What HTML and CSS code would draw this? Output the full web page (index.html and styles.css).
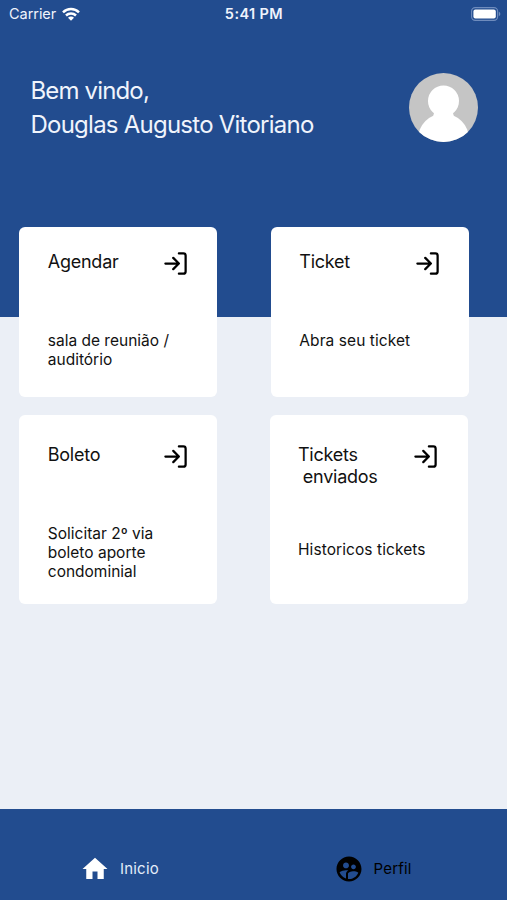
FILE: index.html
```html
<!DOCTYPE html>
<html lang="pt-BR">
<head>
<meta charset="utf-8">
<title>Inicio</title>
<link rel="stylesheet" href="styles.css">
</head>
<body>
<svg width="0" height="0" class="defs" aria-hidden="true">
  <symbol id="enter" viewBox="0 0 24 24">
    <path d="M15 3h4a2 2 0 0 1 2 2v14a2 2 0 0 1-2 2h-4M10 17l5-5-5-5M15 12H3" fill="none" stroke="#000" stroke-width="2" stroke-linecap="round" stroke-linejoin="round"/>
  </symbol>
</svg>
<div class="screen">
  <header class="hero">
    <div class="status">
      <div class="status-left"><span class="carrier">Carrier</span>
        <svg class="wifi" viewBox="0 0 18 14" fill="none" stroke="#fff" stroke-width="2.5">
          <path d="M1 5.3a11.5 11.5 0 0 1 16 0M4 8.5a7.2 7.2 0 0 1 10 0"/>
          <path d="M9 13.8L6 10.8a4.2 4.2 0 0 1 6 0z" fill="#fff" stroke="none"/>
        </svg>
      </div>
      <span class="clock">5:41 PM</span>
      <svg class="battery" viewBox="0 0 30 14">
        <rect x="0.6" y="0.6" width="26" height="12.8" rx="3.6" fill="none" stroke="#6f8cbd" stroke-width="1.1"/>
        <rect x="2.4" y="2.4" width="22.4" height="9.2" rx="2" fill="#fff"/>
        <path d="M27.8 4.8c2 .7 2 3.7 0 4.4z" fill="#6f8cbd"/>
      </svg>
    </div>
    <div class="welcome">
      <p class="greeting"><span class="hello">Bem vindo,</span><br><span class="name">Douglas Augusto Vitoriano</span></p>
      <svg class="avatar" viewBox="0 0 69 69">
        <clipPath id="round"><circle cx="34.5" cy="34.5" r="34.5"/></clipPath>
        <g clip-path="url(#round)">
          <rect width="69" height="69" fill="#c5c5c5"/>
          <circle cx="34.5" cy="28" r="15.5" fill="#fff"/>
          <circle cx="34.5" cy="66" r="25.5" fill="#fff"/>
          <path d="M25 40h19l1 4H24z" fill="#fff"/>
        </g>
      </svg>
    </div>
  </header>
  <main class="cards">
    <section class="card">
      <div class="card-head"><h2 class="tight">Agendar</h2><svg class="enter"><use href="#enter"/></svg></div>
      <p>sala de reunião /<br>auditório</p>
    </section>
    <section class="card">
      <div class="card-head"><h2 class="tight">Ticket</h2><svg class="enter"><use href="#enter"/></svg></div>
      <p class="loose">Abra seu ticket</p>
    </section>
    <section class="card tall">
      <div class="card-head"><h2 class="tight">Boleto</h2><svg class="enter"><use href="#enter"/></svg></div>
      <p>Solicitar 2º via<br>boleto aporte<br>condominial</p>
    </section>
    <section class="card tall sent">
      <div class="card-head"><h2 class="tight">Tickets<br>&nbsp;enviados</h2><svg class="enter"><use href="#enter"/></svg></div>
      <p class="loose">Historicos tickets</p>
    </section>
  </main>
  <nav class="tabs">
    <a class="tab active">
      <svg viewBox="0 0 24 24"><path fill="#fff" d="M10 20v-6h4v6h5v-8h3L12 3 2 12h3v8z"/></svg>
      <span>Inicio</span>
    </a>
    <a class="tab">
      <svg viewBox="0 0 24 24"><path d="M11.99 2c-5.52 0-10 4.48-10 10s4.48 10 10 10 10-4.48 10-10-4.48-10-10-10zm3.61 6.34c1.07 0 1.93.86 1.93 1.93 0 1.07-.86 1.93-1.93 1.93-1.07 0-1.93-.86-1.93-1.93-.01-1.07.86-1.93 1.93-1.93zm-6-1.58c1.3 0 2.36 1.06 2.36 2.36 0 1.3-1.06 2.36-2.36 2.36s-2.36-1.06-2.36-2.36c0-1.31 1.05-2.36 2.36-2.36zm0 9.13v3.75c-2.4-.75-4.3-2.6-5.14-4.96 1.05-1.12 3.67-1.69 5.14-1.69.53 0 1.2.08 1.9.22-1.64.87-1.9 2.02-1.9 2.68zM11.99 20c-.27 0-.53-.01-.79-.04v-4.07c0-1.42 2.94-2.13 4.4-2.13 1.07 0 2.92.39 3.84 1.15-1.17 2.97-4.06 5.09-7.45 5.09z"/></svg>
      <span>Perfil</span>
    </a>
  </nav>
</div>
</body>
</html>
```
FILE: styles.css
```css
* { box-sizing: border-box; margin: 0; }
body { font-family: Inter, "Liberation Sans", sans-serif; color: #111; }
.defs { display: none; }
.screen { width: 507px; height: 900px; display: flex; flex-direction: column; background: #ebeff6; overflow: hidden; }
.hero { height: 317px; flex: none; background: #224c8f; color: #f0f4fc; }
.status { display: grid; grid-template-columns: 1fr auto 1fr; align-items: center; height: 27px; padding: 0 6px 0 9px; }
.status-left { display: flex; align-items: center; gap: 6px; }
.carrier { font-size: 14.5px; letter-spacing: -0.05px; }
.wifi { width: 18px; height: 14px; }
.clock { font-size: 14.5px; font-weight: 600; letter-spacing: 0.4px; margin-left: -2px; }
.battery { width: 30px; height: 14px; justify-self: end; }
.welcome { display: flex; justify-content: space-between; padding: 45.5px 29px 0 30.5px; }
.greeting { font-size: 24px; line-height: 34px; padding-top: 1.5px; white-space: nowrap; }
.hello { letter-spacing: -0.85px; }
.name { letter-spacing: -0.76px; }
.avatar { width: 69px; height: 69px; }
.cards { flex: 1; display: grid; grid-template-columns: 198px 198px; grid-template-rows: 169.5px 189px; column-gap: 53.5px; row-gap: 18.9px; margin-top: -90px; padding-left: 19.4px; }
.card { background: #fff; border-radius: 6px; padding: 23px 28.4px 0; }
.sent { margin-left: -1.3px; margin-right: 1.3px; }
.card-head { display: flex; justify-content: space-between; height: 80.5px; }
.tall { padding-top: 28px; }
.tall .card-head { height: 80.5px; }
.sent .card-head { height: 97px; }
h2 { font-size: 18px; font-weight: 400; line-height: 22px; padding-top: 1px; white-space: nowrap; }
.tall h2 { padding-top: 0.6px; }
.tight { letter-spacing: -0.25px; }
.card p { font-size: 15.5px; line-height: 19px; white-space: nowrap; }
.card .loose { letter-spacing: 0.08px; }
.enter { width: 27px; height: 27px; flex: none; }
.tabs { height: 91px; flex: none; display: flex; background: #224c8f; padding-top: 28px; }
.tab { flex: 1; display: flex; align-items: center; height: 63px; font-size: 15px; letter-spacing: 0.2px; gap: 10px; padding-left: 80px; color: #000; }
.active { color: #e3ecfa; }
.tab svg { width: 30px; height: 30px; }
```
